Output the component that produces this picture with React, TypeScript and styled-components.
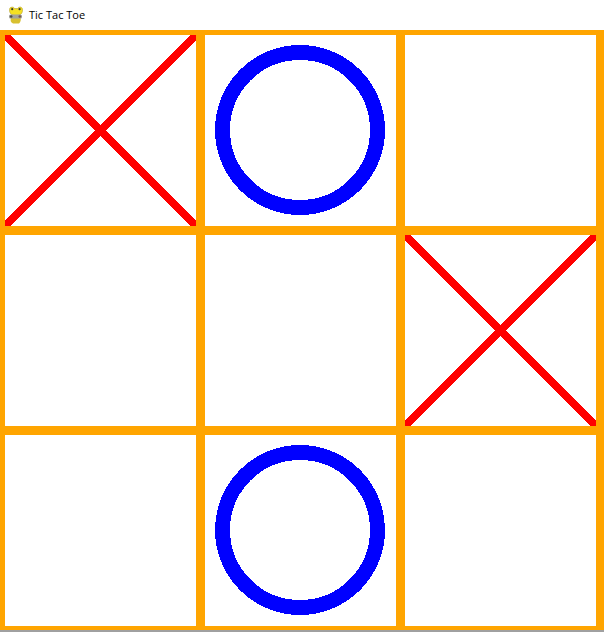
import { createGlobalStyle } from "styled-components";
import styled from "styled-components";

type Mark = "x" | "o" | null;

const cells: Mark[] = ["x", "o", null, null, null, "x", null, "o", null];

const GlobalStyle = createGlobalStyle`
  html, body {
    margin: 0;
    padding: 0;
    background: #fff;
  }
`;

const Window = styled.div`
  width: 604px;
  height: 632px;
  overflow: hidden;
  display: flex;
  flex-direction: column;
  background: #fff;
`;

const TitleBar = styled.div`
  height: 30px;
  display: flex;
  align-items: center;
  gap: 5px;
  padding-left: 8px;
  padding-bottom: 1px;
  box-sizing: border-box;
  font-family: "Open Sans", "Liberation Sans", sans-serif;
  font-size: 11px;
  color: #000;
`;

const Board = styled.div`
  display: grid;
  grid-template-columns: repeat(3, 191px);
  grid-template-rows: repeat(3, 191px);
  gap: 9px;
  padding: 5px 8px 4px 5px;
  background: #ffa500;
`;

const Cell = styled.div`
  background: #fff;
  width: 191px;
  height: 191px;
`;

const MarkSvg = styled.svg`
  display: block;
  width: 191px;
  height: 191px;
`;

const BottomEdge = styled.div`
  height: 2px;
  background: #a0a0a0;
`;

function SnakeIcon() {
  return (
    <svg width="16" height="18" viewBox="0 0 16 18">
      <path d="M3 11 Q1.5 16 5 17.5 L11 17.5 Q13.5 15 12.5 11 Z" fill="#d8c030" />
      <path d="M1.5 5 Q1 1 4 1 Q6 1 6.5 2.5 L9.5 2.5 Q10.5 .8 12.5 1 Q15 1.5 14.5 5 Q14 9.5 8 9.5 Q2 9.5 1.5 5 Z" fill="#f5e022" stroke="#a8952c" strokeWidth="0.5" />
      <circle cx="4.2" cy="3.2" r="1.1" fill="#3a3a30" />
      <circle cx="11.6" cy="3.2" r="1.1" fill="#3a3a30" />
      <rect x="1" y="8.5" width="13" height="4" rx="1.6" fill="#a3a39a" />
      <circle cx="3.2" cy="10.5" r="1.3" fill="#4d4d48" />
      <circle cx="11.8" cy="10.5" r="1.3" fill="#7c5a50" />
    </svg>
  );
}

function CrossMark() {
  return (
    <MarkSvg viewBox="0 0 191 191" shapeRendering="crispEdges">
      <line x1="-4" y1="-4" x2="195" y2="195" stroke="#ff0000" strokeWidth="8" />
      <line x1="195" y1="-4" x2="-4" y2="195" stroke="#ff0000" strokeWidth="8" />
    </MarkSvg>
  );
}

function CircleMark() {
  return (
    <MarkSvg viewBox="0 0 191 191" shapeRendering="crispEdges">
      <circle cx="95" cy="95" r="77.5" fill="none" stroke="#0000ff" strokeWidth="15" />
    </MarkSvg>
  );
}

export default function App() {
  return (
    <>
      <GlobalStyle />
      <Window>
        <TitleBar>
          <SnakeIcon />
          <span>Tic Tac Toe</span>
        </TitleBar>
        <Board>
          {cells.map((mark, i) => (
            <Cell key={i}>
              {mark === "x" && <CrossMark />}
              {mark === "o" && <CircleMark />}
            </Cell>
          ))}
        </Board>
        <BottomEdge />
      </Window>
    </>
  );
}
